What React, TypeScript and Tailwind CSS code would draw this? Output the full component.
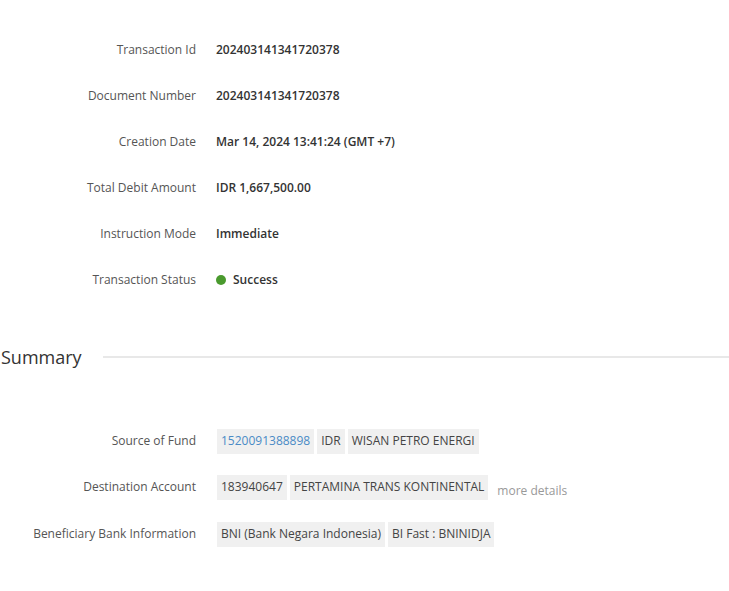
const details = [
  { label: "Transaction Id", value: "202403141341720378" },
  { label: "Document Number", value: "202403141341720378" },
  { label: "Creation Date", value: "Mar 14, 2024 13:41:24 (GMT +7)" },
  { label: "Total Debit Amount", value: "IDR 1,667,500.00" },
  { label: "Instruction Mode", value: "Immediate" },
];

const Chip = ({ children, link }: { children: React.ReactNode; link?: boolean }) => (
  <span
    className={`h-[25px] flex items-center px-[4px] bg-[#f0f0f0] ${link ? "text-[#4a8bc6]" : "text-[#444]"}`}
  >
    {children}
  </span>
);

const Row = ({ label, children, gap = "ml-[20px]", h = "h-[46px]" }: { label: string; children: React.ReactNode; gap?: string; h?: string }) => (
  <div className={`flex items-center ${h}`}>
    <div className="w-[196px] text-right text-[#555] shrink-0">{label}</div>
    <div className={`${gap} flex items-center`}>{children}</div>
  </div>
);

export default function App() {
  return (
    <div
      className="w-[729px] h-[591px] bg-white text-[12px] overflow-hidden"
      style={{ fontFamily: '"Open Sans", "Liberation Sans", sans-serif' }}
    >
      <div className="pt-[27px]">
        {details.map((d) => (
          <Row key={d.label} label={d.label}>
            <span className="font-semibold text-[#333]">{d.value}</span>
          </Row>
        ))}
        <Row label="Transaction Status">
          <span className="w-[10px] h-[10px] rounded-full bg-[#4a9a2e] mr-[7px]" />
          <span className="font-semibold text-[#333]">Success</span>
        </Row>
      </div>

      <div className="flex items-center mt-[42px] h-[24px]">
        <span className="text-[18px] text-[#333] pl-[1px] leading-none">Summary</span>
        <div className="flex-1 ml-[21px] h-[2px] bg-[#e8e8e8]" />
      </div>

      <div className="mt-[49px]">
        <Row label="Source of Fund" gap="ml-[21px]">
          <div className="flex gap-[3px]">
            <Chip link>1520091388898</Chip>
            <Chip>IDR</Chip>
            <Chip>WISAN PETRO ENERGI</Chip>
          </div>
        </Row>
        <Row label="Destination Account" gap="ml-[21px]">
          <div className="flex gap-[3px] items-center">
            <Chip>183940647</Chip>
            <Chip>PERTAMINA TRANS KONTINENTAL</Chip>
            <span className="ml-[6px] mt-[8px] text-[#999]">more details</span>
          </div>
        </Row>
        <Row label="Beneficiary Bank Information" gap="ml-[21px]" h="h-[47px]">
          <div className="flex gap-[3px] mt-[1px]">
            <Chip>BNI (Bank Negara Indonesia)</Chip>
            <Chip>BI Fast : BNINIDJA</Chip>
          </div>
        </Row>
      </div>
    </div>
  );
}
